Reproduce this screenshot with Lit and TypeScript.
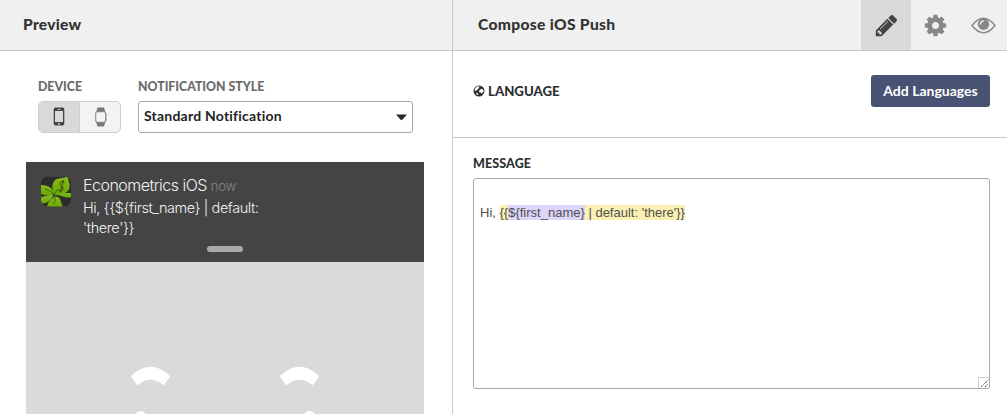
import { LitElement, html, css } from "lit";
import { customElement } from "lit/decorators.js";

@customElement("preview-panel")
class PreviewPanel extends LitElement {
  static styles = css`
    :host { display: block; width: 452px; height: 414px; overflow: hidden; border-right: 1px solid #c9c9c9; box-sizing: content-box; font-family: Lato, sans-serif; }
    * { box-sizing: border-box; }
    .head { height: 51px; padding: 0 23px; background: #f0f0f0; border-bottom: 1px solid #c9c9c9; font-size: 15.6px; font-weight: 900; line-height: 49px; color: #333; letter-spacing: 0.25px; }
    .controls { display: flex; gap: 17px; padding: 28px 0 0 38px; }
    .label { height: 22px; line-height: 15px; font-size: 12.3px; font-weight: 900; color: #6b6b6b; white-space: nowrap; }
    .toggle { display: flex; width: 83px; height: 32px; border: 1px solid #ccc; border-radius: 5px; overflow: hidden; background: #f3f3f3; }
    .side { display: flex; flex: 1; align-items: center; justify-content: center; padding-bottom: 1px; }
    .side.on { background: #d9d9d9; border-right: 1px solid #ccc; }
    .select { display: flex; align-items: center; justify-content: space-between; width: 275px; height: 32px; border: 1px solid #aaa; border-radius: 3px; padding: 0 5px; font-size: 14px; font-weight: 700; color: #222; }
    .value { letter-spacing: 0.22px; padding-bottom: 3px; }
    svg { display: block; }
    .phone { width: 398px; margin: 29px 0 0 26px; background: #dadada; height: 252px; }
    .banner { height: 100px; background: #444; display: flex; flex-direction: column; align-items: center; }
    .row { display: flex; width: 100%; height: 84px; padding: 14px 0 0 15px; gap: 12px; font-family: Inter, sans-serif; font-weight: 300; color: #f2f2f2; }
    .title { font-size: 16px; line-height: 19px; height: 22px; white-space: nowrap; letter-spacing: -0.52px; }
    .now { font-size: 13px; color: #888; letter-spacing: -0.2px; }
    .body { font-size: 14.5px; line-height: 20px; white-space: nowrap; letter-spacing: -0.43px; }
    .grip { width: 36px; height: 6px; border-radius: 3px; background: #aaa; }
    .face { padding: 102px 0 0 102px; }
  `;
  render() {
    return html`
      <div class="head">Preview</div>
      <div class="controls">
        <div>
          <div class="label">DEVICE</div>
          <div class="toggle">
            <div class="side on">
              <svg width="12" height="19" viewBox="0 0 12 19"><path fill="#444" fill-rule="evenodd" d="M2.500 0.500h7a1.800 1.800 0 0 1 1.800 1.800v14.400a1.800 1.800 0 0 1-1.800 1.800h-7a1.800 1.800 0 0 1-1.800-1.800V2.300a1.800 1.800 0 0 1 1.800-1.800zM2 4v11h8V4zM4.500 1.900v.8h3v-.8zM6 16a.9.9 0 1 0 .01 0z"/></svg>
            </div>
            <div class="side">
              <svg width="13" height="20" viewBox="0 0 13 20"><path fill="#747a7d" d="M3.500 0.500h6.500l1.300 4.500H2.200zM2.200 15h9.100l-1.300 4.500H3.500z"/><rect x="1.700" y="4.700" width="9.900" height="10.600" rx="2" fill="#f5f5f5" stroke="#858a8c" stroke-width="1.100"/><path d="M12.200 7v2M12.200 10.500v3" stroke="#8b9092" stroke-width=".8"/></svg>
            </div>
          </div>
        </div>
        <div>
          <div class="label">NOTIFICATION STYLE</div>
          <div class="select"><span class="value">Standard Notification</span><svg width="11" height="7" viewBox="0 0 11 7"><path fill="#2b2b2b" d="M0 .5h11L6.300 5.800q-.8.800-1.600 0z"/></svg></div>
        </div>
      </div>
      <div class="phone">
        <div class="banner">
          <div class="row">
            <svg width="30" height="31" viewBox="0 0 30 30">
              <defs><clipPath id="c"><rect width="30" height="30" rx="7"/></clipPath><linearGradient id="g" x2="0" y2="1"><stop stop-color="#86bc1e"/><stop offset="1" stop-color="#6aa800"/></linearGradient></defs>
              <g clip-path="url(#c)"><rect width="30" height="30" fill="#2b2d2b"/>
                <path fill="url(#g)" d="M13.500 18.500C10 12 11 5 15.500 2.500c3-1 8-.5 11-3 .5 5 3 7 2 12-1.500 5-8 7-15 7z"/>
                <path fill="url(#g)" d="M12.500 18C12 11 8 9-1 8.500v8c4 3 9 2.500 13.500 1.500z"/>
                <path fill="url(#g)" d="M12.500 18.500C7 18 4 20-1 20.500v7c7-.5 11-3 13.500-9z"/>
                <path fill="url(#g)" d="M14 19.500c-3 3-8 6-8 11.500h15.500c.5-2-1-3-1.500-6-.5-3-3-5-6-5.500z"/>
                <path fill="url(#g)" d="M16 18.500c5 0 8 4 15 2v-3.500c-5-1-11-1-15 1.500z"/>
                <path fill="none" stroke="#33480f" stroke-width=".7" d="M13.500 18Q15 14 17.500 12M12.500 17.500Q9 13.500 4 12.500M14 19.500q1 5-1.500 8"/>
                <path fill="none" stroke="#2e410f" stroke-width=".9" d="M23.500 6q-3.500-2.500-4.500.8c-.5 2.700 3.500 2.700 3 5.700q-1 3-4.500 1.500M22.500 3.500L19 16"/>
              </g>
            </svg>
            <div>
              <div class="title">Econometrics iOS <span class="now">now</span></div>
              <div class="body">Hi, {{$\{first_name} | default:<br />'there'}}</div>
            </div>
          </div>
          <div class="grip"></div>
        </div>
        <div class="face">
          <svg width="200" height="60" viewBox="0 0 200 60"><g fill="#fff" stroke="#fff" stroke-width="2" stroke-linejoin="round"><path d="M4 12.500Q22.500-5 41 12.500L35.500 20Q22.500 9.500 9.500 20z"/><path d="M153 12.500Q171.500-5 190 12.500L184.500 20Q171.500 9.500 158.500 20z"/></g><g fill="#fff"><circle cx="12.500" cy="52.500" r="5.500"/><circle cx="181.500" cy="52.500" r="5.500"/></g></svg>
        </div>
      </div>
    `;
  }
}

@customElement("compose-panel")
class ComposePanel extends LitElement {
  static styles = css`
    :host { display: block; flex: 1; font-family: Lato, sans-serif; color: #333; }
    * { box-sizing: border-box; }
    svg { display: block; }
    .head { display: flex; height: 51px; padding-left: 25px; background: #f0f0f0; border-bottom: 1px solid #c9c9c9; font-size: 15.6px; font-weight: 900; line-height: 49px; }
    .name { flex: 1; letter-spacing: 0.32px; }
    .tab { display: flex; width: 50px; align-items: center; justify-content: center; color: #888; }
    .tab.on { background: #d9d9d9; color: #444; }
    .tab:nth-child(3) { padding-right: 2px; }
    .tab:last-child { width: 46px; padding-right: 1px; }
    .lang { display: flex; align-items: center; height: 87px; padding: 0 17px 6px 20px; border-bottom: 1px solid #c9c9c9; font-size: 13.2px; font-weight: 900; gap: 3px; color: #2f3133; }
    .lang .l { flex: 1; }
    .button { width: 119px; height: 32px; border-radius: 3px; background: #485272; color: #fff; font-size: 14px; font-weight: 700; line-height: 31px; text-align: center; }
    .message { padding: 18px 17px 0 20px; }
    .label { height: 22px; font-size: 12.5px; line-height: 16px; font-weight: 900; color: #2f3133; letter-spacing: 0.1px; }
    .area { display: flex; flex-direction: column; justify-content: space-between; height: 211px; border: 1px solid #aaa; border-radius: 3px; padding: 26px 0 0 6px; font: 13px/16px "Liberation Sans", sans-serif; color: #505050; }
    .text { white-space: pre; }
    .liquid { background: #faf0b4; }
    .attr { background: #ded5fb; }
    .grip { align-self: flex-end; width: 11px; height: 11px; border: 1px solid #d0d0d0; border-width: 1px 0 0 1px; }
  `;
  render() {
    return html`
      <div class="head">
        <span class="name">Compose iOS Push</span>
        <div class="tab on"><svg width="25" height="25" viewBox="0 0 1792 1792"><path fill="currentColor" d="M491 1536l91-91-235-235-91 91v107h128v128h107zm523-928q0-22-22-22-10 0-17 7l-542 542q-7 7-7 17 0 22 22 22 10 0 17-7l542-542q7-7 7-17zm-54-192l416 416-832 832h-416v-416zm683 96q0 53-37 90l-166 166-416-416 166-165q36-38 90-38 53 0 91 38l235 234q37 39 37 91z"/></svg></div>
        <div class="tab"><svg width="25" height="25" viewBox="0 0 1792 1792"><path fill="currentColor" d="M1152 896q0-106-75-181t-181-75-181 75-75 181 75 181 181 75 181-75 75-181zm512-109v222q0 12-8 23t-20 13l-185 28q-19 54-39 91 35 50 107 138 10 12 10 25t-9 23q-27 37-99 108t-94 71q-12 0-26-9l-138-108q-44 23-91 38-16 136-29 186-7 28-36 28h-222q-14 0-24.500-8.500t-11.500-21.500l-28-184q-49-16-90-37l-141 107q-10 9-25 9-14 0-25-11-126-114-165-168-7-10-7-23 0-12 8-23 15-21 51-66.500t54-70.500q-27-50-41-99l-183-27q-13-2-21-12.500t-8-23.500v-222q0-12 8-23t19-13l186-28q14-46 39-92-40-57-107-138-10-12-10-24 0-10 9-23 26-36 98.500-107.500t94.500-71.500q13 0 26 10l138 107q44-23 91-38 16-136 29-186 7-28 36-28h222q14 0 24.500 8.500t11.500 21.500l28 184q49 16 90 37l142-107q9-9 24-9 13 0 25 10 129 119 165 170 7 8 7 22 0 12-8 23-15 21-51 66.500t-54 70.500q26 50 41 98l183 28q13 2 21 12.500t8 23.500z"/></svg></div>
        <div class="tab"><svg width="25" height="17" viewBox="0 0 25 17"><path d="M1 8.500Q12.500-6 24 8.500Q12.500 23 1 8.500z" fill="none" stroke="currentColor" stroke-width="1.500"/><circle cx="12.500" cy="7.300" r="5.700" fill="currentColor"/><path d="M9.300 7.200q.3-2.700 3-3.200" fill="none" stroke="#f0f0f0" stroke-width="1.300" stroke-linecap="round"/></svg></div>
      </div>
      <div class="lang">
        <svg width="12" height="12" viewBox="0 0 12 12"><circle cx="6" cy="6" r="5.500" fill="#2f3133"/><path fill="#fff" d="M4 1.500l2-.2.300 1-1 1.700-1.500 1-.8 1-1.400-.8.400-2zM7.200 4.500l1.700-.8 1.700 1.600-.2 1.600-1.900 1.500-1.200-1.200-1 .3-.3-1.400zM3.300 7.500l1.800.9-.3 1.600-1.100-.3z"/></svg>
        <span class="l">LANGUAGE</span>
        <div class="button">Add Languages</div>
      </div>
      <div class="message">
        <div class="label">MESSAGE</div>
        <div class="area">
          <div class="text">Hi, <span class="liquid">{{<span class="attr">$\{first_name}</span> | default: 'there'}}</span></div>
          <div class="grip"><svg width="10" height="10" viewBox="0 0 10 10"><path d="M2 9L9 2M6 9l3-3" stroke="#555" stroke-width="1" stroke-dasharray="1.400 .5"/></svg></div>
        </div>
      </div>
    `;
  }
}

@customElement("app-root")
class AppRoot extends LitElement {
  static styles = css`
    :host { display: flex; width: 1007px; height: 414px; overflow: hidden; background: #fff; }
  `;
  render() {
    return html`<preview-panel></preview-panel><compose-panel></compose-panel>`;
  }
}
